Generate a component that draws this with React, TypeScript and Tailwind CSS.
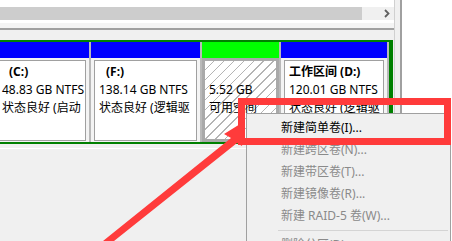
const font = { fontFamily: '"Noto Sans", "Noto Sans CJK SC", sans-serif' };

type Part = {
  label: string;
  indent?: boolean;
  size: string;
  status: string;
  header: string;
  width: string;
  free?: boolean;
  className?: string;
};

const parts: Part[] = [
  { label: '(C:)', indent: true, size: '48.83 GB NTFS', status: '状态良好 (启动', header: 'bg-[#0000ff]', width: 'w-[95px]', className: 'ml-[-6px]' },
  { label: '(F:)', indent: true, size: '138.14 GB NTFS', status: '状态良好 (逻辑驱', header: 'bg-[#0000ff]', width: 'w-[109px]' },
  { label: '', size: '5.52 GB', status: '可用空间', header: 'bg-[#00ff00]', width: 'w-[77px]', free: true },
  { label: '工作区间 (D:)', size: '120.01 GB NTFS', status: '状态良好 (逻辑驱', header: 'bg-[#0000ff]', width: 'w-[106px]' },
];

function Partition({ p }: { p: Part }) {
  return (
    <div className={`flex flex-col shrink-0 ${p.width} ${p.className ?? ''}`}>
      <div className={`h-[16px] ${p.header}`} />
      {p.free ? (
        <div className="flex-1 bg-[#a9a9a9] p-[3px]">
          <div className="h-full bg-[repeating-linear-gradient(135deg,#ffffff_0_6px,#b4b4b4_6px_7px)] pl-[4px] pt-[2px] text-[12px] leading-[18px] text-black whitespace-nowrap overflow-hidden">
            <div className="h-[18px]" />
            <div>{p.size}</div>
            <div>{p.status}</div>
          </div>
        </div>
      ) : (
        <div className="flex-1 bg-[#f4f4f4] pt-[2px] pb-[1px] px-[3px]">
          <div className="h-full bg-white border border-[#a0a0a0] pl-[4px] pt-[2px] text-[12px] leading-[18px] text-black whitespace-nowrap overflow-hidden">
            <div className={`font-bold ${p.indent ? 'pl-[7px]' : ''}`}>{p.label}</div>
            <div>{p.size}</div>
            <div>{p.status}</div>
          </div>
        </div>
      )}
    </div>
  );
}

const menuItems = [
  { text: '新建简单卷(I)...', enabled: true },
  { text: '新建跨区卷(N)...' },
  { text: '新建带区卷(T)...' },
  { text: '新建镜像卷(R)...' },
  { text: '新建 RAID-5 卷(W)...' },
];

export default function App() {
  return (
    <div className="relative w-[452px] h-[241px] overflow-hidden bg-white flex" style={font}>
      {/* main pane */}
      <div className="w-[395px] shrink-0 flex flex-col border-r border-[#d0d0d0] bg-[#f0f0f0]">
        <div className="h-[7px] bg-white" />
        {/* horizontal scrollbar */}
        <div className="h-[13px] flex">
          <div className="w-[362px] bg-[#cdcdcd]" />
          <div className="flex-1 bg-[#f0f0f0] flex items-center justify-end pr-[4px]">
            <svg width="6" height="9" viewBox="0 0 6 9">
              <path d="M1 1 L4.5 4.5 L1 8" fill="none" stroke="#606060" strokeWidth="1.8" />
            </svg>
          </div>
        </div>
        <div className="h-[3px] bg-white" />
        <div className="h-[5px] bg-[#f4f4f4]" />
        <div className="h-[2px] bg-[#a0a0a0]" />
        <div className="h-[10px] bg-[#f0f0f0]" />
        {/* disk row */}
        <div className="w-[393px] h-[104px] border-t-2 border-b-2 border-r-4 border-[#008000] bg-[#b9b9b9] flex gap-[2px] overflow-hidden">
          {parts.map((p) => (
            <Partition key={p.size} p={p} />
          ))}
        </div>
        <div className="flex-1 pt-[4px]">
          <div className="h-full border-t border-white bg-[#f0f0f0]" />
        </div>
      </div>
      <div className="w-[5px] shrink-0 bg-[#f0f0f0] border-r-2 border-[#a0a0a0] box-content" />
      <div className="flex-1 bg-white" />

      {/* context menu */}
      <div className="absolute left-[246px] top-[113px] w-[205px] h-[140px] bg-[#f0f0f0] border border-[#a0a0a0] pt-[3px] text-[12px]">
        {menuItems.map((m) => (
          <div
            key={m.text}
            className={`h-[22px] flex items-center pl-[34px] whitespace-nowrap ${m.enabled ? 'text-black' : 'text-[#8a8a8a]'}`}
          >
            {m.text}
          </div>
        ))}
        <div className="ml-[31px] mr-[2px] my-[3px] h-px bg-[#d4d4d4]" />
        <div className="h-[22px] flex items-center pl-[34px] text-[#8a8a8a] whitespace-nowrap">删除分区(D)...</div>
      </div>

      {/* annotation: highlight box */}
      <div className="absolute left-[238px] top-[98px] w-[213px] h-[47px] border-[7px] border-[#ff3b3b]" />

      {/* annotation: arrow */}
      <svg className="absolute left-0 top-0" width="452" height="241" viewBox="0 0 452 241">
        <polygon
          points="103,241 114,241 237,143 242,146 245,121 224,134 231,138"
          fill="#ff3b3b"
        />
      </svg>
    </div>
  );
}
